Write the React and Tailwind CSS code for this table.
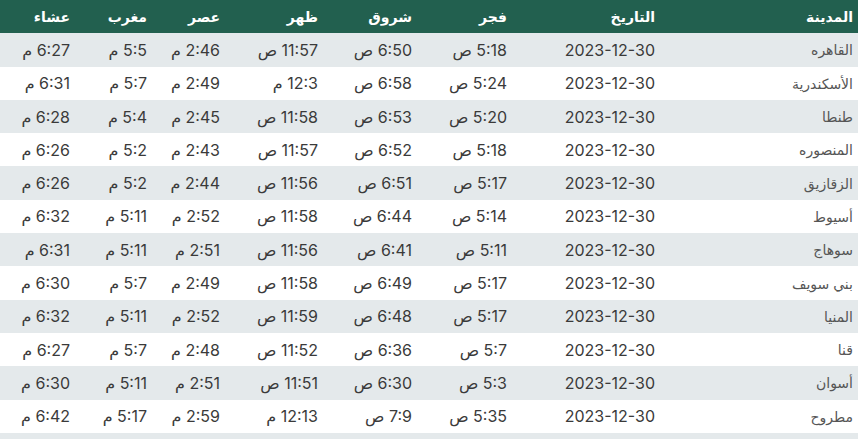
import React from "react";

const cols = [
  { key: "city", label: "المدينة", w: "w-[198px]" },
  { key: "date", label: "التاريخ", w: "w-[148px]" },
  { key: "fajr", label: "فجر", w: "w-[95px]" },
  { key: "shurooq", label: "شروق", w: "w-[94px]" },
  { key: "dhuhr", label: "ظهر", w: "w-[98px]" },
  { key: "asr", label: "عصر", w: "w-[73px]" },
  { key: "maghrib", label: "مغرب", w: "w-[77px]" },
  { key: "isha", label: "عشاء", w: "w-[75px]" },
];

const rows = [
  ["القاهره", "5:18 ص", "6:50 ص", "11:57 ص", "2:46 م", "5:5 م", "6:27 م"],
  ["الأسكندرية", "5:24 ص", "6:58 ص", "12:3 م", "2:49 م", "5:7 م", "6:31 م"],
  ["طنطا", "5:20 ص", "6:53 ص", "11:58 ص", "2:45 م", "5:4 م", "6:28 م"],
  ["المنصوره", "5:18 ص", "6:52 ص", "11:57 ص", "2:43 م", "5:2 م", "6:26 م"],
  ["الزقازيق", "5:17 ص", "6:51 ص", "11:56 ص", "2:44 م", "5:2 م", "6:26 م"],
  ["أسيوط", "5:14 ص", "6:44 ص", "11:58 ص", "2:52 م", "5:11 م", "6:32 م"],
  ["سوهاج", "5:11 ص", "6:41 ص", "11:56 ص", "2:51 م", "5:11 م", "6:31 م"],
  ["بني سويف", "5:17 ص", "6:49 ص", "11:58 ص", "2:49 م", "5:7 م", "6:30 م"],
  ["المنيا", "5:17 ص", "6:48 ص", "11:59 ص", "2:52 م", "5:11 م", "6:32 م"],
  ["قنا", "5:7 ص", "6:36 ص", "11:52 ص", "2:48 م", "5:7 م", "6:27 م"],
  ["أسوان", "5:3 ص", "6:30 ص", "11:51 ص", "2:51 م", "5:11 م", "6:30 م"],
  ["مطروح", "5:35 ص", "7:9 ص", "12:13 م", "2:59 م", "5:17 م", "6:42 م"],
];

const App = () => {
  return (
    <div
      dir="rtl"
      className="w-[858px] h-[439px] overflow-hidden bg-white font-['Inter','DejaVu_Sans',sans-serif]"
    >
      {/* Header */}
      <div className="flex h-[33.3px] bg-[#22604f] text-white text-[14px] font-bold">
        {cols.map((c) => (
          <div key={c.key} className={`${c.w} flex items-center pr-[5px]`}>
            {c.label}
          </div>
        ))}
      </div>

      {/* Rows */}
      {rows.map((r, i) => (
        <div
          key={i}
          className={`flex h-[33.3px] text-[16px] text-[#3a3a3a] ${
            i % 2 === 0 ? "bg-[#e4e9eb]" : "bg-white"
          }`}
        >
          <div className="w-[198px] flex items-center pr-[5px] text-[14px] text-[#555]">
            {r[0]}
          </div>
          <div className="w-[148px] flex items-center pr-[5px]">2023-12-30</div>
          {r.slice(1).map((v, j) => (
            <div key={j} className={`${cols[j + 2].w} flex items-center pr-[5px]`}>
              {v}
            </div>
          ))}
        </div>
      ))}
      <div className="h-[33.3px] bg-[#e4e9eb]" />
    </div>
  );
};

export default App;
